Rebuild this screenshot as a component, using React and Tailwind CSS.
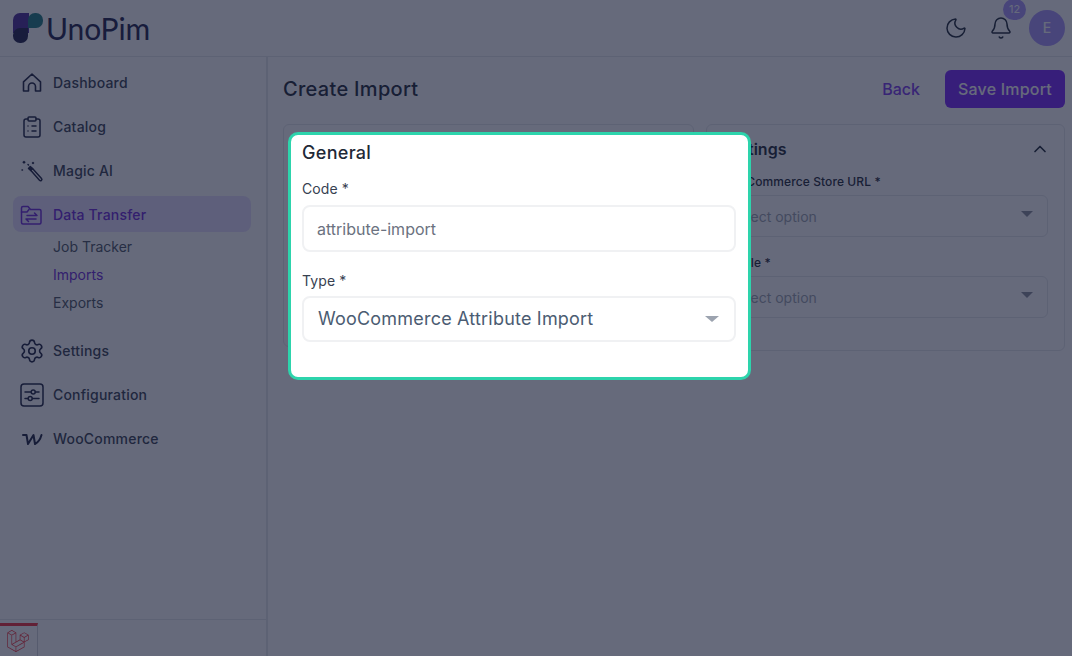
import { ClipboardList, Settings, Moon, Bell, ChevronUp } from 'lucide-react'
import { FaLaravel } from 'react-icons/fa'

const HomeIcon = ({ className }) => (
  <svg className={className} viewBox="0 0 24 24" fill="none" stroke="currentColor" strokeWidth="1.6" strokeLinejoin="round">
    <path d="M3.500 20V10.800L12 3l8.500 7.800V20h-5v-4.500a3.500 3.500 0 0 0-7 0V20Z" />
  </svg>
)

const WandIcon = ({ className }) => (
  <svg className={className} viewBox="0 0 24 24" fill="none" stroke="currentColor" strokeWidth="1.5" strokeLinecap="round" strokeLinejoin="round">
    <path d="M12.500 9.500 21.500 19.500a1.300 1.300 0 0 1-2 1.800l-8.800-10Z" />
    <path d="m8.500 9.500 1.800-2 2.200 2-1.800 2Z" fill="currentColor" />
    <path d="M4 2.500v1.500M3.200 3.200h1.600M13 3.500v1M12.500 4h1M2 11h.5M8 5.500l.5.500" />
  </svg>
)

const FolderTransfer = ({ className }) => (
  <svg className={className} viewBox="0 0 24 24" fill="none" stroke="currentColor" strokeWidth="1.5" strokeLinecap="round" strokeLinejoin="round">
    <path d="M1.500 5Q1.500 3.500 3 3.500h5l2.500 3h9q1.500 0 1.500 1.500v11.500q0 1.500-1.500 1.500H3q-1.500 0-1.500-1.500Z" />
    <path d="M1.500 9H7l2-2.500" />
    <path d="M7 12.500h10L14.500 10" />
    <path d="M16 16H6l2.500 2.500" />
  </svg>
)

const ConfigIcon = ({ className }) => (
  <svg className={className} viewBox="0 0 24 24" fill="none" stroke="currentColor" strokeWidth="1.5" strokeLinecap="round">
    <rect x="1" y="1" width="22" height="22" rx="3" />
    <path d="M5 9h6M15.500 9H19M5 15.500h3M12.500 15.500H19" />
    <circle cx="13.200" cy="9" r="2" />
    <circle cx="10.200" cy="15.500" r="2" />
  </svg>
)

const WooIcon = ({ className }) => (
  <svg className={className} viewBox="0 0 24 24" fill="none" stroke="currentColor" strokeLinecap="round" strokeLinejoin="round">
    <path d="M3 8h3.500L8 17l5.500-9L15 17c3-1.500 5.500-5.500 6.500-9" strokeWidth="2" />
  </svg>
)

const Logo = () => (
  <div className="flex items-center gap-[3px]">
    <svg className="w-[30px] h-[30px]" viewBox="0 0 30 30">
      <path d="M0 7a7 7 0 0 1 7-7h9v20H0Z" fill="#4c2c99" />
      <path d="M15 7a7 7 0 0 1 7-7h1a7 7 0 0 1 7 7v1a7 7 0 0 1-7 7h-8Z" fill="#1f7c80" />
      <path d="M0 22a7 7 0 0 1 7-7h8v8a7 7 0 0 1-7 7H7a7 7 0 0 1-7-7Z" fill="#20224a" />
    </svg>
    <span className="font-['Lato'] text-[30px] leading-none font-normal text-[#20224a] tracking-[-0.1px]">UnoPim</span>
  </div>
)

const NAV = [
  { label: 'Dashboard', icon: HomeIcon },
  { label: 'Catalog', icon: ClipboardList },
  { label: 'Magic AI', icon: WandIcon },
]

const NAV_AFTER = [
  { label: 'Settings', icon: Settings, iconClass: 'w-[26px] h-[26px] -mx-px' },
  { label: 'Configuration', icon: ConfigIcon },
  { label: 'WooCommerce', icon: WooIcon },
]

function NavItem({ label, icon: Icon, iconClass = 'w-6 h-6' }) {
  return (
    <div className="flex items-center gap-[9px] h-9 px-[7px] rounded-lg mb-2 text-[#374151]">
      <Icon className={`${iconClass} text-[#1e2340]`} strokeWidth={1.5} />
      <span className="text-sm font-medium tracking-[0.2px]">{label}</span>
    </div>
  )
}

function SelectBox({ children }) {
  return (
    <div className="flex items-center justify-between h-[42px] pl-[9px] pr-[14px] pt-[2px] border border-[#e5e7eb] rounded-md bg-white">
      <span className="text-sm text-[#9ca3af]">{children}</span>
      <span className="w-0 h-0 border-x-[6px] border-x-transparent border-t-[6px] border-t-[#8b909c] mb-[6px]" />
    </div>
  )
}

export default function App() {
  return (
    <div className="relative w-[1072px] h-[656px] overflow-hidden bg-white font-['Inter',sans-serif]">
      <header className="flex items-center justify-between h-[57px] pl-[13px] pr-[7px] border-b border-[#e5e7eb]">
        <Logo />
        <div className="flex items-center">
          <Moon className="w-6 h-6 mr-[21px] text-[#1f2937]" strokeWidth={1.5} />
          <div className="relative mr-[16px]">
            <Bell className="w-6 h-6 text-[#1f2937]" strokeWidth={1.5} />
            <span className="absolute -top-[17px] left-[14px] flex items-center justify-center w-[23px] h-[21px] rounded-full bg-[#a994fb] text-white text-[11px]">12</span>
          </div>
          <div className="flex items-center justify-center w-9 h-9 rounded-full bg-[#a994fb] text-white text-sm font-medium">E</div>
        </div>
      </header>

      <div className="flex h-[599px]">
        <aside className="flex flex-col w-[268px] border-r-2 border-[#e5e7eb] shrink-0">
          <nav className="flex-1 pt-[8px] pl-[13px] pr-[15px]">
            {NAV.map((item) => <NavItem key={item.label} {...item} />)}
            <div className="flex items-center gap-[9px] h-9 -mt-px pt-[2px] px-[7px] rounded-lg bg-[#e8e0ff] text-[#6d28d9]">
              <FolderTransfer className="w-6 h-6" />
              <span className="text-sm font-medium tracking-[0.2px]">Data Transfer</span>
            </div>
            <div className="flex flex-col pl-10 pt-[1px] pb-[16px] text-sm">
              <span className="h-7 leading-7 text-[#4b5563]">Job Tracker</span>
              <span className="h-7 leading-7 text-[#6d28d9]">Imports</span>
              <span className="h-7 leading-7 text-[#4b5563]">Exports</span>
            </div>
            {NAV_AFTER.map((item) => <NavItem key={item.label} {...item} />)}
          </nav>
          <div className="flex h-[37px] border-t border-[#e5e7eb]">
            <div className="w-[38px] border-r border-[#d1d5db] border-t-[3px] border-t-[#f4303a] mt-[3px] pl-[7px] pt-[4px]">
              <FaLaravel className="w-[22px] h-[22px] text-[#f4303a]" />
            </div>
          </div>
        </aside>

        <main className="flex-1 pl-[15px] pr-[7px] pt-[13px]">
          <div className="flex items-center justify-between h-[38px]">
            <h1 className="text-xl font-medium text-[#1f2937] tracking-[0.3px]">Create Import</h1>
            <div className="flex items-center gap-[25px]">
              <span className="text-base font-medium text-[#7c3aed]">Back</span>
              <button className="h-[38px] w-[120px] rounded-md bg-[#7a26fb] text-white text-base font-medium tracking-[0.2px]">Save Import</button>
            </div>
          </div>
          <div className="flex gap-3 mt-[16px]">
            <section className="w-[411px] h-[223px] bg-white border border-[#e5e7eb] rounded-md" />
            <section className="w-[359px] h-[227px] bg-white border border-[#e5e7eb] rounded-md pt-[12px] pl-[13px] pr-[16px]">
              <div className="flex items-center justify-between">
                <h2 className="ml-[3px] text-base leading-6 font-semibold text-[#1f2937]">Settings</h2>
                <ChevronUp className="w-5 h-5 -mr-[2px] text-[#1f2937]" strokeWidth={2} />
              </div>
              <label className="block mt-[13px] mb-[5px] text-xs font-medium leading-4 text-[#1f2937] tracking-[0.1px]">WooCommerce Store URL *</label>
              <SelectBox>Select option</SelectBox>
              <label className="block ml-[2px] mt-[18px] mb-[5px] text-xs font-medium leading-4 text-[#1f2937] tracking-[0.2px]">Locale *</label>
              <SelectBox>Select option</SelectBox>
            </section>
          </div>
        </main>
      </div>

      <div className="absolute inset-0 bg-[#141a34]/[0.65]" />

      <div className="absolute left-[288px] top-[132px] w-[463px] h-[248px] bg-white border-[3px] border-[#2dd4ac] rounded-[10px] pl-[11px] pr-3 pt-[4px]">
        <h2 className="text-lg leading-7 font-medium text-[#1f2937] tracking-[0.3px]">General</h2>
        <label className="block mt-[14px] text-sm leading-4 font-normal text-[#374151] tracking-[0.1px]">Code *</label>
        <div className="flex items-center h-[47px] mt-2 px-[13px] border-2 border-[#f0f1f3] rounded-lg text-base text-[#6b7280]">attribute-import</div>
        <label className="block mt-[21px] text-sm leading-4 font-normal text-[#374151] tracking-[0.1px]">Type *</label>
        <div className="flex items-center justify-between h-[46px] mt-[7px] pl-[14px] pr-[15px] border-2 border-[#f0f1f3] rounded-lg">
          <span className="text-lg text-[#4b5c72] tracking-[0.2px]">WooCommerce Attribute Import</span>
          <span className="w-0 h-0 border-x-[7px] border-x-transparent border-t-[6px] border-t-[#9ca3af]" />
        </div>
      </div>
    </div>
  )
}
